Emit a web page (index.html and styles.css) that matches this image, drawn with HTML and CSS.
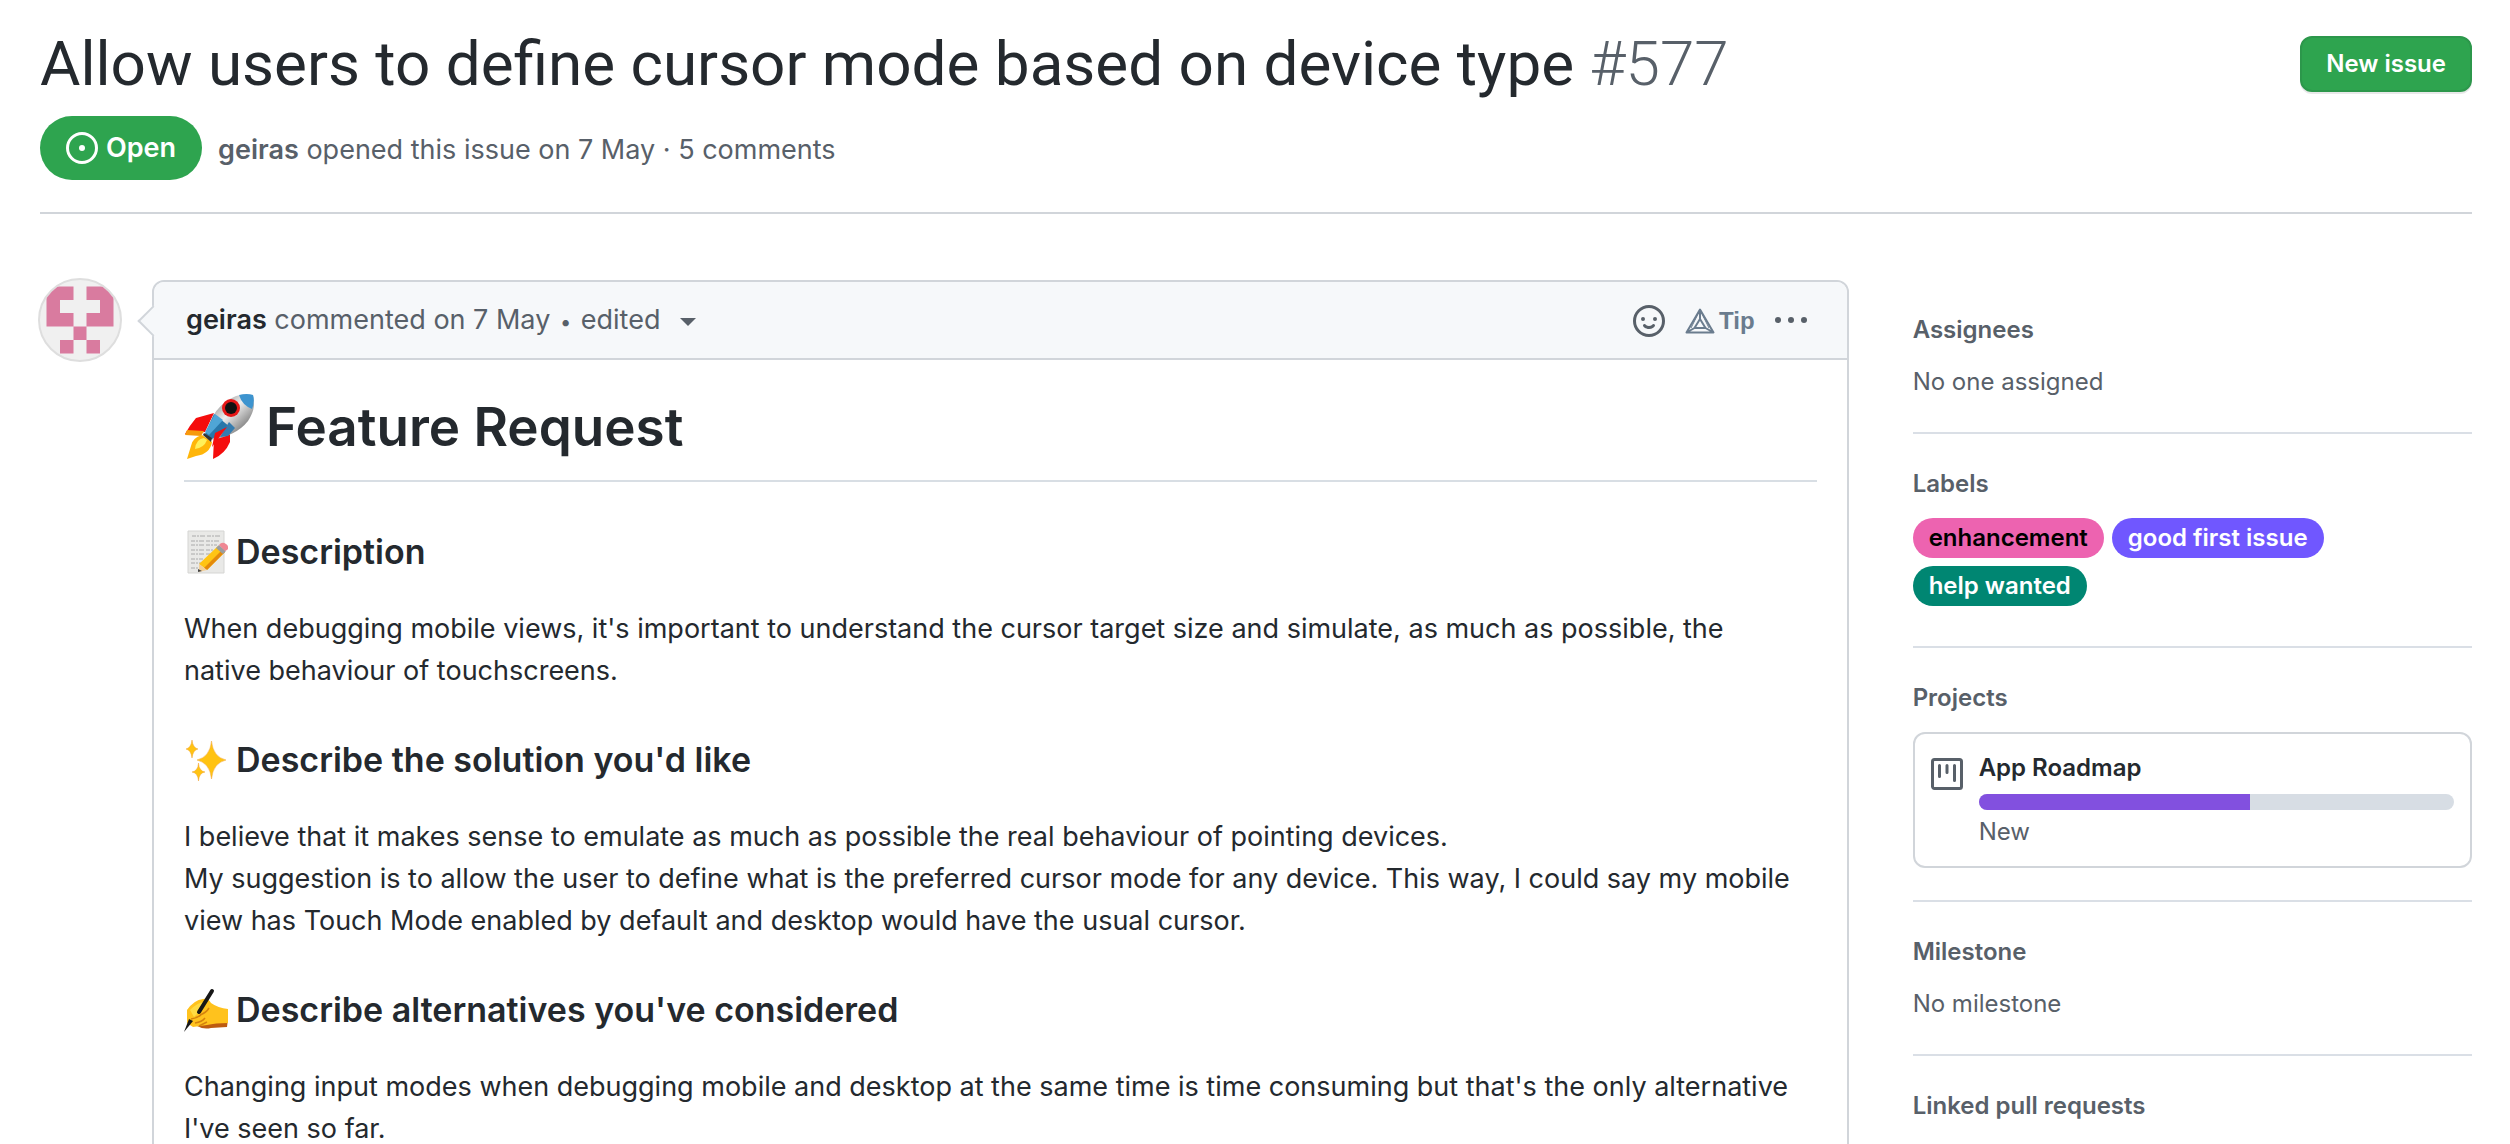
FILE: index.html
```html
<!DOCTYPE html>
<html lang="en">
<head>
    <meta charset="UTF-8">
    <meta name="viewport" content="width=device-width, initial-scale=1.0">
    <title>Allow users to define cursor mode based on device type · Issue #577</title>
    <link rel="stylesheet" href="styles.css">
</head>
<body>
    <div class="container">
        <header class="issue-header">
            <div class="title-row">
                <h1 class="issue-title">Allow users to define cursor mode based on device type <span class="issue-number">#577</span></h1>
                <button type="button" class="btn-primary">New issue</button>
            </div>
            <div class="meta-row">
                <span class="state">
                    <svg class="icon" viewBox="0 0 16 16" aria-hidden="true"><path d="M8 9.5a1.5 1.5 0 100-3 1.5 1.5 0 000 3z"/><path fill-rule="evenodd" d="M8 0a8 8 0 100 16A8 8 0 008 0zM1.5 8a6.5 6.5 0 1113 0 6.5 6.5 0 01-13 0z"/></svg>
                    Open
                </span>
                <p class="meta"><a href="#">geiras</a> opened this issue on 7 May · 5 comments</p>
            </div>
        </header>

        <div class="layout">
            <a class="avatar" href="#" aria-label="geiras">
                <svg viewBox="0 0 84 84" aria-hidden="true">
                    <clipPath id="round"><circle cx="42" cy="42" r="40"/></clipPath>
                    <circle cx="42" cy="42" r="41" fill="#f0f0f0" stroke="#dedede" stroke-width="2"/>
                    <path clip-path="url(#round)" fill="#d97b9f" d="M8.500 8.500h27v13.500h-13.500v13h13.500v13.500h13v-13.500h13.500v-13h-13.500v-13.500h27v40h-27v13.500h13.500v13.500h-13.500v-13.500h-13v13.500h-13.500v-13.500h13.500v-13.500h-27z"/>
                </svg>
            </a>

            <main class="comment">
                <div class="comment-header">
                    <p class="comment-info"><a href="#">geiras</a> commented on 7 May <span class="dot">•</span> <button type="button" class="edited">edited <span class="caret"></span></button></p>
                    <div class="actions">
                        <button type="button" aria-label="Add reaction">
                            <svg class="icon" viewBox="0 0 16 16" aria-hidden="true"><path fill-rule="evenodd" d="M1.500 8a6.500 6.500 0 1113 0 6.500 6.500 0 01-13 0zM8 0a8 8 0 100 16A8 8 0 008 0zM5 8a1 1 0 100-2 1 1 0 000 2zm7-1a1 1 0 11-2 0 1 1 0 012 0zM5.320 9.636a.75.75 0 011.038.175l.007.009c.103.118.22.222.35.31.264.178.683.37 1.285.37.602 0 1.020-.192 1.285-.371.130-.088.247-.192.350-.310l.007-.008a.75.75 0 111.222.87l-.614-.431c.614.430.614.431.613.431v.001l-.001.002-.002.003-.005.007-.014.019a1.984 1.984 0 01-.184.213c-.160.166-.338.316-.530.445-.630.418-1.370.638-2.127.629-.946 0-1.652-.308-2.126-.630a3.320 3.320 0 01-.715-.657l-.014-.020-.005-.006-.002-.003v-.002h-.001l.613-.432-.614.430a.75.75 0 01.183-1.044h.001z"/></svg>
                        </button>
                        <button type="button" class="tip">
                            <svg class="tip-icon" viewBox="0 0 30 26" aria-hidden="true"><path fill="none" stroke="currentColor" stroke-width="2" stroke-linejoin="round" d="M15 1.500L28.500 24.500H1.500zM15 11l5.500 9h-11zM15 1.500V11M1.500 24.500l8-4.500M28.500 24.500l-8-4.500"/><path fill="none" stroke="currentColor" d="M15 2L6 20M15 2l9 18"/></svg>
                            Tip
                        </button>
                        <button type="button" aria-label="More options">
                            <svg class="icon" viewBox="0 0 16 16" aria-hidden="true"><circle cx="1.500" cy="7.500" r="1.500"/><circle cx="8" cy="7.500" r="1.500"/><circle cx="14.500" cy="7.500" r="1.500"/></svg>
                        </button>
                    </div>
                </div>

                <article class="comment-body">
                    <h2>
                        <svg class="emoji-large" viewBox="0 0 70 66" role="img" aria-label="rocket">
                            <defs>
                                <linearGradient id="hull" x1="0" y1="0" x2="1" y2="1"><stop offset="0.200" stop-color="#999"/><stop offset="0.450" stop-color="#eee"/><stop offset="0.900" stop-color="#555"/></linearGradient>
                            </defs>
                            <path fill="#f50d0d" d="M30 19L12 24Q6 31 1 40l20-2zM46 38v10Q41 60 29 65l1-20z"/>
                            <path fill="#f79a0c" d="M3 36l17 1-3 5-16-1z"/>
                            <path fill="#ffb60a" d="M18 41Q8 44 7 52L3 65l9-3Q26 60 28 48z"/>
                            <path fill="#fff05a" d="M20 44Q12 45 11 55q9-1 12-9z"/>
                            <path fill="url(#hull)" d="M22 41Q28 12 52 2Q62-1 69 1Q73 13 64 27Q52 42 27 46z"/>
                            <path fill="#3d94cf" d="M55 1Q63-1 69 1Q71 8 68 15Q58 11 55 1z"/>
                            <path fill="#2877aa" d="M30 20l16 13-18 12-7-5z"/>
                            <path fill="#4fa5d6" d="M31 20l8 6-14 15-4-3z"/>
                            <path fill="#357caf" d="M45 28l6 6-7 8-8 1z"/>
                            <path fill="#f50d0d" d="M43 33l-15 20 3-14z"/>
                            <circle cx="47" cy="14" r="9" fill="#e51717"/>
                            <circle cx="47" cy="14" r="6" fill="#111"/>
                            <path fill="#333" d="M20 39l8 5-1 4-8-7z"/>
                        </svg>
                        Feature Request
                    </h2>

                    <h3>
                        <svg class="emoji" viewBox="0 0 44 44" role="img" aria-label="memo">
                            <path fill="#e9e9e7" stroke="#d5d5d3" d="M4 1h36v42H4z"/>
                            <path fill="none" stroke="#aaa" stroke-width="1" stroke-dasharray="4 1 2 1 5 2" d="M8 6h29M7 11h28M7 15h26M7 20h22M7 24h20M7 29h12M7 33h10M7 38h8"/>
                            <path fill="#ffc414" d="M34 16l7 6-18 18-8-6z"/>
                            <path fill="#e48a0b" d="M38 20l3 2-18 18-3-2z"/>
                            <path fill="#f3cf98" d="M15 34l8 6-8 2z"/>
                            <path fill="#444" d="M14 39l4 2-4 1z"/>
                            <path fill="#9a9d9f" d="M32 18l3-3 7 6-3 3z"/>
                            <path fill="#ef8793" d="M35 15q3-4 7-1t1 6l-2 1z"/>
                        </svg>
                        Description
                    </h3>
                    <p>When debugging mobile views, it's important to understand the cursor target size and simulate, as much as possible, the native behaviour of touchscreens.</p>

                    <h3>
                        <svg class="emoji" viewBox="0 0 44 44" role="img" aria-label="sparkles">
                            <path fill="#ffc312" stroke="#f0a43c" stroke-width="0.500" d="M27.500 3Q29 19 42 22Q29 25 27.500 41Q26 25 13 22Q26 19 27.500 3zM8 2Q9 10 14 11Q9 12 8 20Q7 12 2 11Q7 10 8 2zM14.500 25Q15 33 21 34Q15 35 14.500 43Q14 35 8 34Q14 33 14.500 25z"/>
                        </svg>
                        Describe the solution you'd like
                    </h3>
                    <p>I believe that it makes sense to emulate as much as possible the real behaviour of pointing devices.<br>
                    My suggestion is to allow the user to define what is the preferred cursor mode for any device. This way, I could say my mobile view has Touch Mode enabled by default and desktop would have the usual cursor.</p>

                    <h3>
                        <svg class="emoji" viewBox="0 0 44 44" role="img" aria-label="writing hand">
                            <path fill="#bd5b10" d="M5 31Q15 43 27 40l16-1 1-8z"/>
                            <path fill="#ffc21d" d="M3 35V22Q10 12 19 11q5-1 8 4 7 5 17 6v14Q31 35 23 37L9 39z"/>
                            <path fill="#ffdb43" d="M6 22q8-8 15-8 2 3-3 7l-8 8z"/>
                            <path fill="none" stroke="#d4820d" stroke-width="1.500" d="M16 27q6-2 9-7M7 31q7-1 11-5M11 35q7-1 10-5M15 38l8-4"/>
                            <path fill="none" stroke="#171717" stroke-width="4" stroke-linecap="round" d="M28 3L15 24"/>
                            <path fill="#171717" d="M5 31l4 2-9 11z"/>
                        </svg>
                        Describe alternatives you've considered
                    </h3>
                    <p>Changing input modes when debugging mobile and desktop at the same time is time consuming but that's the only alternative I've seen so far.</p>
                </article>
            </main>

            <aside class="sidebar">
                <section class="sidebar-item">
                    <h4>Assignees</h4>
                    <p>No one assigned</p>
                </section>
                <section class="sidebar-item">
                    <h4>Labels</h4>
                    <div class="labels">
                        <a href="#" class="label label-pink">enhancement</a>
                        <a href="#" class="label label-purple">good first issue</a>
                        <a href="#" class="label label-green">help wanted</a>
                    </div>
                </section>
                <section class="sidebar-item">
                    <h4>Projects</h4>
                    <div class="project">
                        <svg class="icon" viewBox="0 0 16 16" aria-hidden="true"><path fill-rule="evenodd" d="M1.750 0A1.750 1.750 0 000 1.750v12.500C0 15.216.784 16 1.750 16h12.500A1.750 1.750 0 0016 14.250V1.750A1.750 1.750 0 0014.250 0H1.750zM1.500 1.750a.25.25 0 01.25-.25h12.500a.25.25 0 01.25.25v12.500a.25.25 0 01-.25.25H1.750a.25.25 0 01-.25-.25V1.750zM11.750 3a.75.75 0 00-.75.75v7.500a.75.75 0 001.500 0v-7.500a.75.75 0 00-.75-.75zm-8.250.750a.75.75 0 011.500 0v5.500a.75.75 0 01-1.500 0v-5.500zM8 3a.75.75 0 00-.75.75v3.500a.75.75 0 001.500 0v-3.500A.75.75 0 008 3z"/></svg>
                        <div class="project-info">
                            <a href="#">App Roadmap</a>
                            <div class="progress"><div class="progress-bar" style="width: 57%"></div></div>
                            <p>New</p>
                        </div>
                    </div>
                </section>
                <section class="sidebar-item">
                    <h4>Milestone</h4>
                    <p>No milestone</p>
                </section>
                <section class="sidebar-item">
                    <h4>Linked pull requests</h4>
                </section>
            </aside>
        </div>
    </div>
</body>
</html>
```
FILE: styles.css
```css
* {
    box-sizing: border-box;
}

body {
    font-family: Inter, "Liberation Sans", sans-serif;
    font-size: 27px;
    line-height: 42px;
    color: #24292e;
    background-color: #ffffff;
    margin: 0;
}

h1, h2, h3, h4, p {
    margin: 0;
}

a {
    color: inherit;
    text-decoration: none;
}

button {
    font: inherit;
    color: inherit;
    background: none;
    border: none;
    padding: 0;
    cursor: pointer;
}

.container {
    height: 100vh;
    overflow: hidden;
    padding: 28px 38px 0 40px;
}

.icon {
    width: 32px;
    height: 32px;
    fill: currentColor;
    flex: none;
    display: block;
}

/* Header */
.issue-header {
    border-bottom: 2px solid #d1d5da;
    padding-bottom: 32px;
    margin-bottom: 66px;
}

.title-row {
    display: flex;
    justify-content: space-between;
    align-items: center;
    margin-bottom: 16px;
}

.issue-title {
    font-family: Roboto, Inter, sans-serif;
    font-size: 62px;
    font-weight: 400;
    line-height: 72px;
}

.issue-number {
    font-weight: 300;
    color: #586069;
}

.btn-primary {
    font-size: 24px;
    font-weight: 600;
    line-height: 40px;
    color: #ffffff;
    background-color: #2ea44f;
    border: 2px solid #2c974b;
    border-radius: 12px;
    padding: 6px 24px;
    box-shadow: 0 2px 0 rgba(27, 31, 35, 0.1);
}

.meta-row {
    display: flex;
    align-items: center;
    gap: 16px;
    color: #586069;
}

.state {
    display: flex;
    align-items: center;
    gap: 8px;
    height: 64px;
    padding: 0 26px;
    border-radius: 32px;
    font-weight: 600;
    color: #ffffff;
    background-color: #2ea44f;
}

.meta {
    padding-top: 4px;
}

.meta a {
    font-weight: 600;
}

/* Layout */
.layout {
    display: flex;
    align-items: flex-start;
}

.avatar {
    flex: none;
    width: 84px;
    height: 84px;
    margin: -2px 30px 0 -2px;
}

.avatar svg {
    display: block;
}

/* Comment */
.comment {
    flex: 1;
    min-width: 0;
    position: relative;
    border: 2px solid #d1d5da;
    border-radius: 12px;
    margin-right: 64px;
}

.comment::before {
    content: "";
    position: absolute;
    top: 28px;
    left: -12px;
    width: 20px;
    height: 20px;
    background-color: #f6f8fa;
    border-left: 2px solid #d1d5da;
    border-bottom: 2px solid #d1d5da;
    transform: rotate(45deg);
}

.comment-header {
    display: flex;
    justify-content: space-between;
    align-items: center;
    height: 78px;
    padding: 2px 40px 0 32px;
    color: #586069;
    background-color: #f6f8fa;
    border-bottom: 2px solid #d1d5da;
    border-radius: 10px 10px 0 0;
}

.comment-info a {
    font-weight: 600;
    color: #24292e;
}

.dot {
    font-size: 20px;
    margin: 0 2px;
}

.caret {
    display: inline-block;
    vertical-align: middle;
    margin-left: 12px;
    border: 8px solid transparent;
    border-top-color: #586069;
    border-bottom: 0;
}

.actions {
    display: flex;
    align-items: center;
    gap: 20px;
}

.tip {
    display: flex;
    align-items: center;
    gap: 4px;
    font-family: "Liberation Sans", sans-serif;
    font-size: 24px;
    font-weight: 700;
    color: #6a7c8e;
}

.tip-icon {
    width: 30px;
    height: 26px;
}

.comment-body {
    padding: 32px 30px;
}

.comment-body h2 {
    display: flex;
    align-items: center;
    gap: 12px;
    font-size: 53px;
    font-weight: 600;
    line-height: 70px;
    padding-bottom: 18px;
    border-bottom: 2px solid #d8dee4;
}

.comment-body h3 {
    display: flex;
    align-items: center;
    gap: 8px;
    font-size: 34px;
    font-weight: 600;
    line-height: 44px;
    margin: 46px 0 34px;
}

.comment-body h2 + h3 {
    margin-top: 48px;
}

.comment-body p {
    padding-right: 16px;
}

.emoji-large {
    width: 70px;
    height: 66px;
}

.emoji {
    width: 44px;
    height: 44px;
}

/* Sidebar */
.sidebar {
    flex: none;
    width: 23%;
    font-size: 24px;
    line-height: 36px;
    color: #586069;
}

.sidebar-item {
    padding: 32px 0;
}

.sidebar-item + .sidebar-item {
    border-top: 2px solid #dadfe6;
}

.sidebar-item h4 {
    font-size: 24px;
    font-weight: 600;
    margin-bottom: 16px;
}

.labels {
    display: flex;
    flex-wrap: wrap;
    gap: 8px;
    padding-right: 80px;
    margin-bottom: 8px;
}

.label {
    font-weight: 600;
    line-height: 40px;
    padding: 0 16px;
    border-radius: 20px;
    color: #ffffff;
}

.label-pink {
    background-color: #ed63b0;
    color: #000000;
}

.label-purple {
    background-color: #7057ff;
}

.label-green {
    background-color: #008672;
}

.project {
    display: flex;
    gap: 16px;
    padding: 16px;
    border: 2px solid #d1d5da;
    border-radius: 12px;
}

.project .icon {
    margin-top: 8px;
}

.project-info {
    flex: 1;
}

.project-info a {
    display: block;
    font-weight: 600;
    color: #24292e;
}

.progress {
    height: 16px;
    margin: 8px 0 4px;
    border-radius: 8px;
    overflow: hidden;
    background-color: #d7dde4;
}

.progress-bar {
    height: 100%;
    background-color: #8250df;
}
```
